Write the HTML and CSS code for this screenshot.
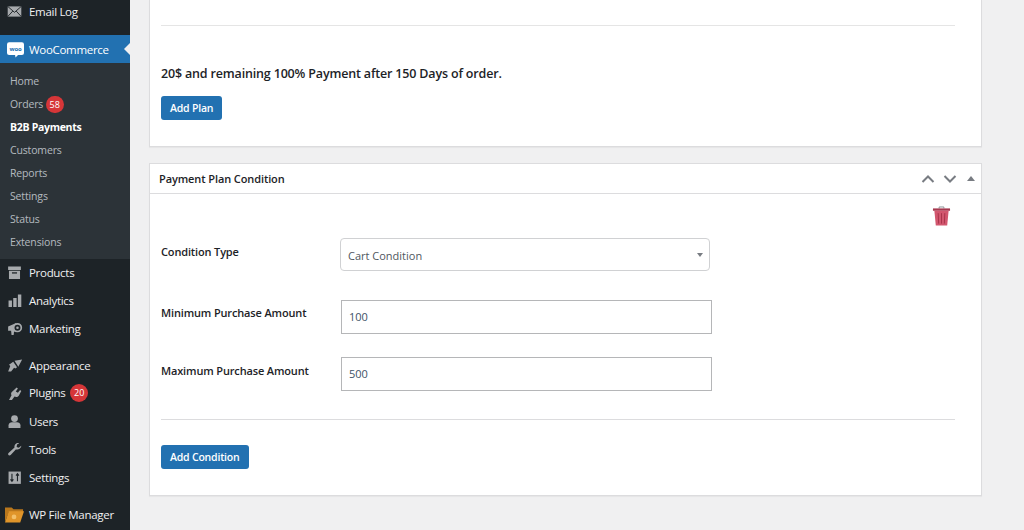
FILE: index.html
```html
<!DOCTYPE html>
<html lang="en">
<head>
    <meta charset="UTF-8">
    <title>B2B Payments</title>
    <link rel="stylesheet" href="styles.css">
</head>
<body>
    <div class="sidebar">
        <ul class="menu">
            <li class="item">
                <svg class="icon" viewBox="0 0 20 20"><path d="M2 4h16v12H2z" fill="#a7aaad"/><path d="M2 4l8 7 8-7M2 16l6-6.500M18 16l-6-6.500" fill="none" stroke="#1d2327" stroke-width="1.100"/></svg>
                <span>Email Log</span>
            </li>
            <li class="item active">
                <svg class="icon woo" viewBox="0 0 20 20"><path d="M2.500 1.500h15A2.500 2.500 0 0 1 20 4v10a2.500 2.500 0 0 1-2.500 2.500H13L10 19.500l-.5-3h-7A2.500 2.500 0 0 1 0 14V4a2.500 2.500 0 0 1 2.500-2.500z" fill="#fff"/><text x="10" y="11.500" class="woo-mark">woo</text></svg>
                <span>WooCommerce</span>
            </li>
            <li class="submenu">
                <a>Home</a>
                <a>Orders <b class="count small">58</b></a>
                <a class="current">B2B Payments</a>
                <a>Customers</a>
                <a>Reports</a>
                <a>Settings</a>
                <a>Status</a>
                <a>Extensions</a>
            </li>
            <li class="item">
                <svg class="icon" viewBox="0 0 20 20"><path d="M2.500 3h15v4h-15zM3.500 8h13v9.500h-13z" fill="#a7aaad"/><path d="M7 10.500h6" stroke="#1d2327" stroke-width="1.500"/></svg>
                <span>Products</span>
            </li>
            <li class="item">
                <svg class="icon" viewBox="0 0 20 20"><path d="M3 10h4v7.500H3zM8.500 7h4v10.500h-4zM14 3h4v14.500h-4z" fill="#a7aaad"/></svg>
                <span>Analytics</span>
            </li>
            <li class="item">
                <svg class="icon" viewBox="0 0 20 20"><path d="M2.500 7.500L12 3.500v11L9.500 13.500 9 17.500H6.500L6 12.500H2.500z" fill="#a7aaad"/><circle cx="13.500" cy="9" r="4.500" fill="#1d2327" stroke="#a7aaad" stroke-width="2"/><circle cx="13.500" cy="9" r="1.500" fill="#a7aaad"/></svg>
                <span>Marketing</span>
            </li>
            <li class="item group">
                <svg class="icon" viewBox="0 0 20 20"><path d="M10 4.500L19 3l-4.500 8.500zM8.500 5.500l4.500 6.500-2 1.500-1.500-1L6 17H2.500L5 10.500 3.500 9z" fill="#a7aaad"/></svg>
                <span>Appearance</span>
            </li>
            <li class="item">
                <svg class="icon" viewBox="0 0 20 20"><path d="M12.500 3l1.500 1-2.500 3.500 2.500 1.500 2.500-3 1.500 1-3 5.500c-1 1.500-3 2-5 1L7 17.500H3.500L6.500 12c-1-1.500-.5-3.500 1-4.500z" fill="#a7aaad"/></svg>
                <span>Plugins <b class="count">20</b></span>
            </li>
            <li class="item">
                <svg class="icon" viewBox="0 0 20 20"><circle cx="10" cy="6.500" r="4" fill="#a7aaad"/><path d="M3 17.500v-3c0-2 2-3.500 4-3.500h6c2 0 4 1.500 4 3.500v3z" fill="#a7aaad"/></svg>
                <span>Users</span>
            </li>
            <li class="item">
                <svg class="icon" viewBox="0 0 20 20"><path d="M18 5.500l-3 2.500-2.500-1 .5-3 2.500-1.500c-3.500-.5-6 2-5.500 5L3 14c-1.500 1.500.5 4 2.500 2.500l6-6.500c3.500.5 6.500-2 6.500-4.500z" fill="#a7aaad"/></svg>
                <span>Tools</span>
            </li>
            <li class="item">
                <svg class="icon" viewBox="0 0 20 20"><path d="M3 3h14.500v14.500H3z" fill="#a7aaad"/><path d="M7 5.500v9M5.300 12.300L7 14.500l1.700-2.200M13.500 14.500v-9M11.800 7.700l1.700-2.200 1.700 2.200" fill="none" stroke="#1d2327" stroke-width="1.300"/></svg>
                <span>Settings</span>
            </li>
            <li class="item group">
                <svg class="icon folder" viewBox="0 0 20 20"><path d="M0 2.500h7l2 2h10v3H4L0 18z" fill="#b9771c"/><path d="M4 6.500h16L16 18.500H0z" fill="#e0952a"/><circle cx="9.500" cy="12.500" r="2.500" fill="#f3c069"/></svg>
                <span>WP File Manager</span>
            </li>
        </ul>
    </div>
    <div class="main">
        <div class="panel first">
            <hr class="rule">
            <p class="plan">20$ and remaining 100% Payment after 150 Days of order.</p>
            <div class="button">Add Plan</div>
        </div>
        <div class="panel second">
            <div class="panel-head">
                <h2>Payment Plan Condition</h2>
                <div class="handles">
                    <svg viewBox="0 0 14 10"><path d="M1.500 8L7 2.500 12.500 8" fill="none" stroke="#787c82" stroke-width="2"/></svg>
                    <svg viewBox="0 0 14 10"><path d="M1.500 2L7 7.500 12.500 2" fill="none" stroke="#787c82" stroke-width="2"/></svg>
                    <span class="caret"></span>
                </div>
            </div>
            <div class="panel-body">
                <div class="trash-row">
                    <svg class="trash" viewBox="0 0 20 22"><path d="M7.500 3V1.500h5V3" fill="none" stroke="#8a8f94" stroke-width="1"/><path d="M1 3h18v2.500H1z" fill="#a63a50"/><path d="M2.500 5.500h15L16 21H4z" fill="#d2566e"/><path d="M6.500 8l.5 11M10 8v11M13.500 8L13 19" stroke="#a83349" stroke-width="1"/></svg>
                </div>
                <div class="field select-field">
                    <label>Condition Type</label>
                    <div class="select">Cart Condition<span class="arrow"></span></div>
                </div>
                <div class="field input-field">
                    <label>Minimum Purchase Amount</label>
                    <div class="input">100</div>
                </div>
                <div class="field input-field last">
                    <label>Maximum Purchase Amount</label>
                    <div class="input">500</div>
                </div>
                <hr class="rule dark">
                <div class="button">Add Condition</div>
            </div>
        </div>
    </div>
</body>
</html>
```
FILE: styles.css
```css
html, body {
    height: 530px;
    overflow: hidden;
}
body {
    font-family: "Open Sans", "Noto Sans", sans-serif;
    font-size: 13px;
    margin: 0;
    padding: 0;
    display: flex;
    background: #f0f0f1;
    color: #1d2327;
}
.sidebar {
    width: 130px;
    flex: none;
    background: #1d2327;
    overflow: hidden;
}
.menu {
    list-style: none;
    margin: -2px 0 0;
    padding: 0;
}
.item {
    height: 28px;
    box-sizing: border-box;
    display: flex;
    align-items: center;
    gap: 6px;
    padding: 0 0 2px 6px;
    color: #f0f0f1;
    font-size: 11.500px;
    letter-spacing: -0.3px;
    white-space: nowrap;
}
.icon {
    width: 17px;
    height: 17px;
    flex: none;
}
.icon.woo {
    margin-left: 1px;
    margin-right: -1px;
}
.icon.folder {
    width: 19px;
    height: 19px;
    margin: 0 -1px 0 -1px;
}
.group {
    margin-top: 9px;
}
.active {
    background: #2271b1;
    color: #fff;
    margin-top: 9px;
    padding-bottom: 0;
    position: relative;
}
.active::after {
    content: "";
    position: absolute;
    right: 0;
    top: 8px;
    border: 6px solid transparent;
    border-right-color: #f0f0f1;
    border-left: 0;
}
.woo-mark {
    font-size: 7px;
    font-weight: 700;
    fill: #2271b1;
    text-anchor: middle;
    font-family: "Open Sans", sans-serif;
    letter-spacing: -0.2px;
}
.submenu {
    background: #2c3338;
    padding: 6.500px 0 5.500px;
    display: flex;
    flex-direction: column;
}
.submenu a {
    height: 23px;
    line-height: 23px;
    padding-left: 10px;
    font-size: 10.500px;
    letter-spacing: -0.15px;
    color: rgba(240, 246, 252, 0.7);
    white-space: nowrap;
}
.submenu .current {
    color: #fff;
    font-weight: 700;
    letter-spacing: -0.3px;
}
.count {
    display: inline-block;
    min-width: 18px;
    height: 18px;
    line-height: 18px;
    padding: 0;
    text-align: center;
    border-radius: 9px;
    background: #d63638;
    color: #fff;
    font-size: 9px;
    font-weight: 400;
    letter-spacing: 0;
    vertical-align: 1px;
    margin-left: 2px;
}
.count.small {
    height: 17px;
    line-height: 17px;
    vertical-align: 0;
    margin-left: 0;
}
.main {
    flex: 1;
    padding-left: 19px;
    padding-right: 42px;
}
.panel {
    background: #fff;
    border: 1px solid #dcdcde;
    box-shadow: 0 1px 1px rgba(0, 0, 0, 0.04);
}
.first {
    border-top: 0;
    height: 147px;
    box-sizing: border-box;
    padding: 25px 26px 0 11px;
}
.second {
    margin-top: 16px;
    height: 333px;
    box-sizing: border-box;
}
.rule {
    border: 0;
    border-top: 1px solid #e5e5e5;
    margin: 0;
}
.rule.dark {
    border-top-color: #dcdcde;
}
.plan {
    margin: 39px 0 0;
    font-size: 12.500px;
    font-weight: 600;
    letter-spacing: -0.17px;
    line-height: 18px;
    color: #1d2327;
}
.button {
    display: inline-block;
    background: #2271b1;
    color: #fff;
    font-size: 10.500px;
    font-weight: 600;
    letter-spacing: -0.2px;
    line-height: 24px;
    padding: 0 9px;
    border-radius: 3px;
}
.first .button {
    margin-top: 13px;
}
.panel-head {
    height: 29px;
    display: flex;
    align-items: center;
    justify-content: space-between;
    border-bottom: 1px solid #dcdcde;
    padding: 0 6px 0 9px;
}
.panel-head h2 {
    margin: 0;
    font-size: 11px;
    font-weight: 600;
    letter-spacing: -0.1px;
    color: #1d2327;
}
.handles {
    display: flex;
    align-items: center;
    gap: 8px;
}
.handles svg {
    width: 14px;
    height: 10px;
}
.caret {
    width: 0;
    height: 0;
    border: 4px solid transparent;
    border-top: 0;
    border-bottom: 5px solid #787c82;
    margin-left: 2px;
}
.panel-body {
    padding: 0 26px 0 11px;
}
.trash-row {
    display: flex;
    justify-content: flex-end;
    height: 44px;
    padding: 11px 4px 0 0;
    box-sizing: border-box;
}
.trash {
    width: 19px;
    height: 22px;
}
.field {
    display: flex;
    align-items: flex-start;
}
.field label {
    width: 180px;
    flex: none;
    font-size: 11px;
    font-weight: 600;
    letter-spacing: -0.15px;
    line-height: 16px;
    padding-top: 5px;
}
.select-field label {
    padding-top: 6px;
}
.input-field.last label {
    padding-top: 6px;
}
.select {
    width: 370px;
    height: 33px;
    box-sizing: border-box;
    border: 1px solid #d0d1d3;
    border-radius: 4px;
    padding-left: 7px;
    line-height: 33px;
    font-size: 11px;
    color: #50575e;
    position: relative;
    margin-left: -1px;
}
.arrow {
    position: absolute;
    right: 6px;
    top: 14px;
    border: 3.500px solid transparent;
    border-top: 4px solid #787c82;
    border-bottom: 0;
}
.input {
    width: 371px;
    height: 34px;
    box-sizing: border-box;
    border: 1px solid #b5b6b8;
    padding-left: 7px;
    line-height: 32px;
    font-size: 11px;
    color: #3d5266;
}
.input-field {
    margin-top: 29px;
}
.input-field.last {
    margin-top: 23px;
}
.panel-body .rule {
    margin-top: 28px;
}
.panel-body .button {
    margin-top: 25px;
}
```
